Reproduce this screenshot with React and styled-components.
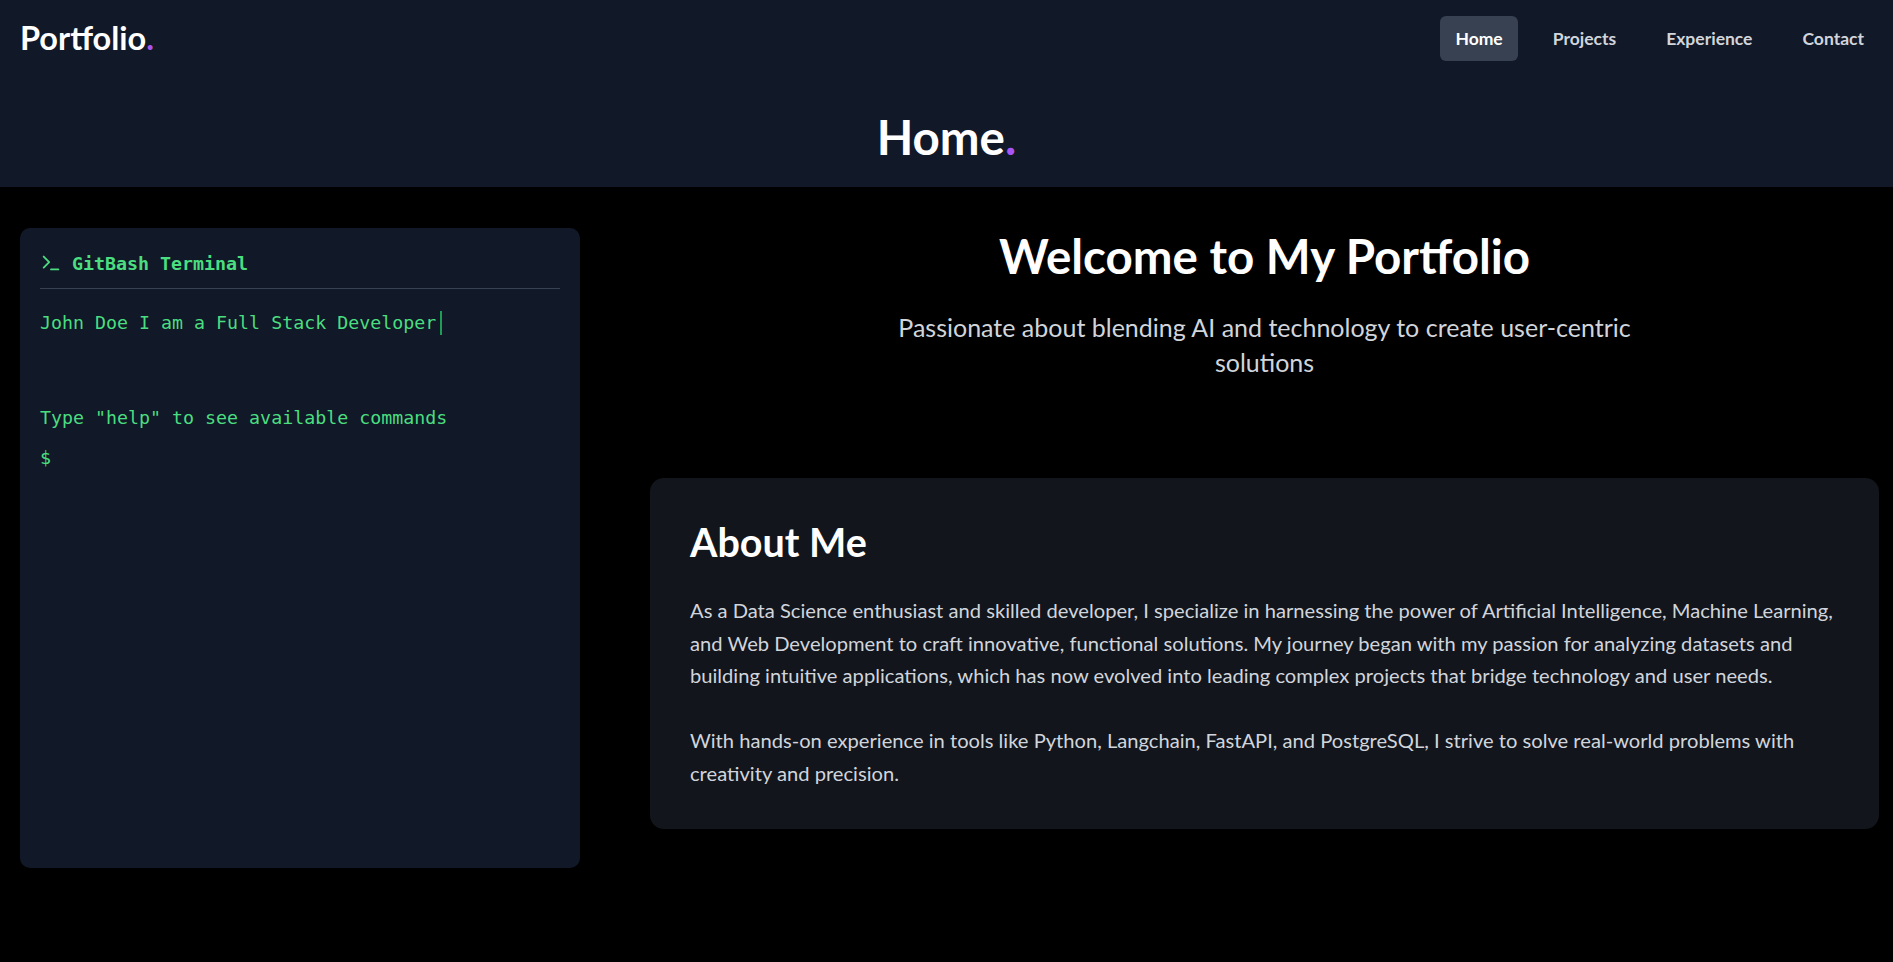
import React from 'react';
import styled, { createGlobalStyle } from 'styled-components';

const GlobalStyle = createGlobalStyle`
  * { box-sizing: border-box; }
  html, body { margin: 0; padding: 0; background: #000; }
  body {
    font-family: Lato, "Open Sans", sans-serif;
    color: #fff;
    -webkit-font-smoothing: antialiased;
  }
`;

const navItems = ['Home', 'Projects', 'Experience', 'Contact'];

const TerminalIcon = () => (
  <svg width="22" height="22" viewBox="0 0 24 24" fill="none" stroke="currentColor" strokeWidth="2" strokeLinecap="round" strokeLinejoin="round">
    <polyline points="4 17 10 11 4 5" />
    <line x1="12" y1="19" x2="20" y2="19" />
  </svg>
);

const App = () => {
  return (
    <Page>
      <GlobalStyle />
      <Header>
        <NavBar>
          <Logo>Portfolio<Dot>.</Dot></Logo>
          <NavList>
            {navItems.map((item) => (
              <NavLink key={item} active={item === 'Home'}>{item}</NavLink>
            ))}
          </NavList>
        </NavBar>
        <PageTitle>Home<Dot>.</Dot></PageTitle>
      </Header>

      <Main>
        <Terminal>
          <TerminalHeader>
            <TerminalIcon />
            <span>GitBash Terminal</span>
          </TerminalHeader>
          <TypedLine>
            John Doe I am a Full Stack Developer<Caret />
          </TypedLine>
          <HelpLine>Type "help" to see available commands</HelpLine>
          <Prompt>$</Prompt>
        </Terminal>

        <Content>
          <Hero>
            <HeroTitle>Welcome to My Portfolio</HeroTitle>
            <HeroText>
              Passionate about blending AI and technology to create user-centric solutions
            </HeroText>
          </Hero>

          <Card>
            <CardTitle>About Me</CardTitle>
            <Paragraph>
              As a Data Science enthusiast and skilled developer, I specialize in harnessing the power of
              Artificial Intelligence, Machine Learning, and Web Development to craft innovative, functional
              solutions. My journey began with my passion for analyzing datasets and building intuitive
              applications, which has now evolved into leading complex projects that bridge technology and
              user needs.
            </Paragraph>
            <Paragraph>
              With hands-on experience in tools like Python, Langchain, FastAPI, and PostgreSQL, I strive to
              solve real-world problems with creativity and precision.
            </Paragraph>
          </Card>
        </Content>
      </Main>
    </Page>
  );
};

export default App;

const Page = styled.div`
  min-height: 962px;
  background: #000;
`;

const Header = styled.header`
  background: #111827;
  height: 187px;
`;

const NavBar = styled.nav`
  height: 77px;
  display: flex;
  align-items: center;
  justify-content: space-between;
  padding: 0 14px 0 20px;
`;

const Logo = styled.div`
  font-size: 32.5px;
  font-weight: 700;
  color: #fff;
  line-height: 1;
`;

const Dot = styled.span`
  color: #a855f7;
`;

const NavList = styled.div`
  display: flex;
  align-items: center;
  gap: 20px;
`;

const NavLink = styled.a`
  display: block;
  padding: 0 15px;
  height: 45px;
  line-height: 45px;
  border-radius: 6px;
  font-size: 17.5px;
  font-weight: 700;
  color: ${(p) => (p.active ? '#fff' : '#d1d5db')};
  background: ${(p) => (p.active ? '#374151' : 'transparent')};
  cursor: pointer;
`;

const PageTitle = styled.h1`
  margin: 0;
  height: 110px;
  display: flex;
  align-items: center;
  justify-content: center;
  padding-top: 8px;
  font-size: 47.5px;
  font-weight: 700;
  color: #fff;
`;

const Main = styled.main`
  display: flex;
  align-items: flex-start;
  gap: 70px;
  padding: 41px 14px 40px 20px;
`;

const Terminal = styled.section`
  flex: 0 0 560px;
  height: 640px;
  background: #111827;
  border-radius: 10px;
  padding: 20px;
  font-family: "DejaVu Sans Mono", "Liberation Mono", monospace;
  font-size: 18.3px;
  color: #4ade80;
`;

const TerminalHeader = styled.div`
  display: flex;
  align-items: center;
  gap: 10px;
  box-sizing: content-box;
  height: 30px;
  padding-bottom: 10px;
  margin-bottom: 19px;
  border-bottom: 1px solid #374151;
  font-weight: 700;
`;

const TermLine = styled.div`
  line-height: 30px;
  white-space: pre;
`;

const TypedLine = styled(TermLine)`
  display: flex;
  align-items: center;
`;

const Caret = styled.span`
  display: inline-block;
  width: 2px;
  height: 24px;
  margin-left: 4px;
  background: #1f9d55;
`;

const HelpLine = styled(TermLine)`
  margin-top: 65px;
`;

const Prompt = styled(TermLine)`
  margin-top: 10px;
`;

const Content = styled.div`
  flex: 1;
  display: flex;
  flex-direction: column;
  align-items: center;
`;

const Hero = styled.div`
  text-align: center;
  margin-bottom: 98px;
`;

const HeroTitle = styled.h2`
  margin: 0;
  font-size: 47.5px;
  line-height: 56px;
  font-weight: 700;
  color: #fff;
`;

const HeroText = styled.p`
  margin: 26px auto 0;
  max-width: 760px;
  font-size: 25px;
  line-height: 35px;
  color: #d1d5db;
`;

const Card = styled.article`
  align-self: stretch;
  background: #12161c;
  border-radius: 14px;
  padding: 40px;
`;

const CardTitle = styled.h3`
  margin: 0 0 28px;
  font-size: 39.5px;
  line-height: 48px;
  font-weight: 700;
  color: #fff;
`;

const Paragraph = styled.p`
  margin: 0;
  font-size: 20.15px;
  line-height: 32.5px;
  color: #d1d5db;

  & + & {
    margin-top: 32.5px;
  }
`;
